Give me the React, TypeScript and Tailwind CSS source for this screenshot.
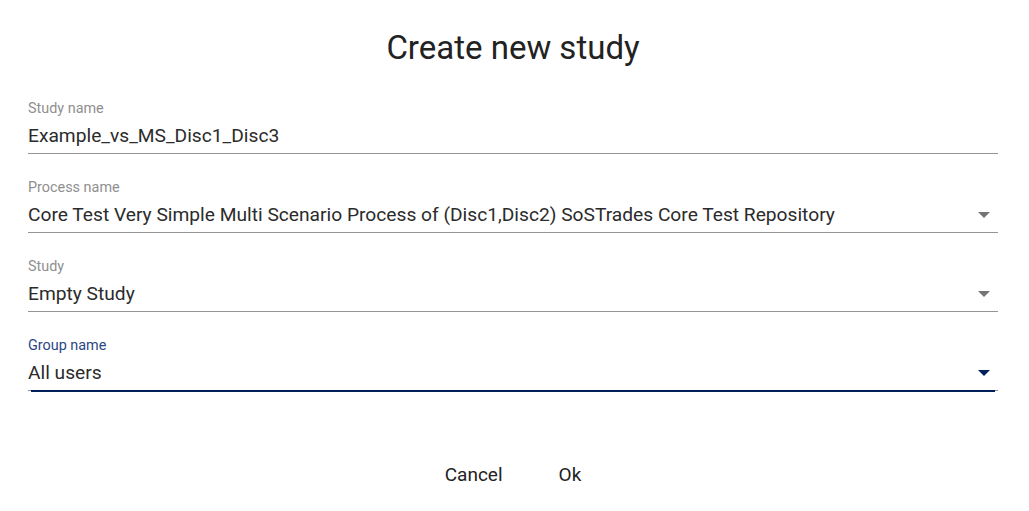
import React from 'react';

type Field = {
  label: string;
  value: string;
  select?: boolean;
  focused?: boolean;
};

const FIELDS: Field[] = [
  { label: 'Study name', value: 'Example_vs_MS_Disc1_Disc3' },
  {
    label: 'Process name',
    value: 'Core Test Very Simple Multi Scenario Process of (Disc1,Disc2) SoSTrades Core Test Repository',
    select: true,
  },
  { label: 'Study', value: 'Empty Study', select: true },
  { label: 'Group name', value: 'All users', select: true, focused: true },
];

function FormField({ field }: { field: Field }) {
  return (
    <div className="relative">
      <div className="flex flex-col pt-[25px] pb-[6px]">
        <span
          className={`text-[14.4px] leading-[17px] ${field.focused ? 'text-[#2a4783]' : 'text-[#8f8f8f]'}`}
        >
          {field.label}
        </span>
        <div className="mt-[8px] flex items-center">
          <span className="flex-1 truncate text-[19.2px] leading-[22px] text-[#2b2b2b]">{field.value}</span>
          {field.select && (
            <svg width="12" height="6" viewBox="0 0 12 6" className="mr-[8px]">
              <path d="M0 0 L6 6 L12 0 Z" fill={field.focused ? '#00205b' : '#757575'} />
            </svg>
          )}
        </div>
      </div>
      <div className="h-px bg-[#949494]" />
      {field.focused && <div className="absolute bottom-[-1px] left-[3px] right-[3px] h-[2px] bg-[#00205b]" />}
    </div>
  );
}

export default function App() {
  return (
    <div className="h-[511px] w-[1029px] bg-white font-['Roboto','Liberation_Sans',sans-serif]">
      <div className="pl-[28px] pr-[31px] pt-[28px]">
        <h1 className="text-center text-[33px] leading-[40px] font-normal text-[#222222]">Create new study</h1>
        <div className="mt-[7px] flex flex-col">
          {FIELDS.map((f) => (
            <FormField key={f.label} field={f} />
          ))}
        </div>
        <div className="mt-[66px] flex justify-center gap-[56px]">
          <button className="text-[19px] leading-[36px] text-[#222222]">Cancel</button>
          <button className="text-[19px] leading-[36px] text-[#222222]">Ok</button>
        </div>
      </div>
    </div>
  );
}
